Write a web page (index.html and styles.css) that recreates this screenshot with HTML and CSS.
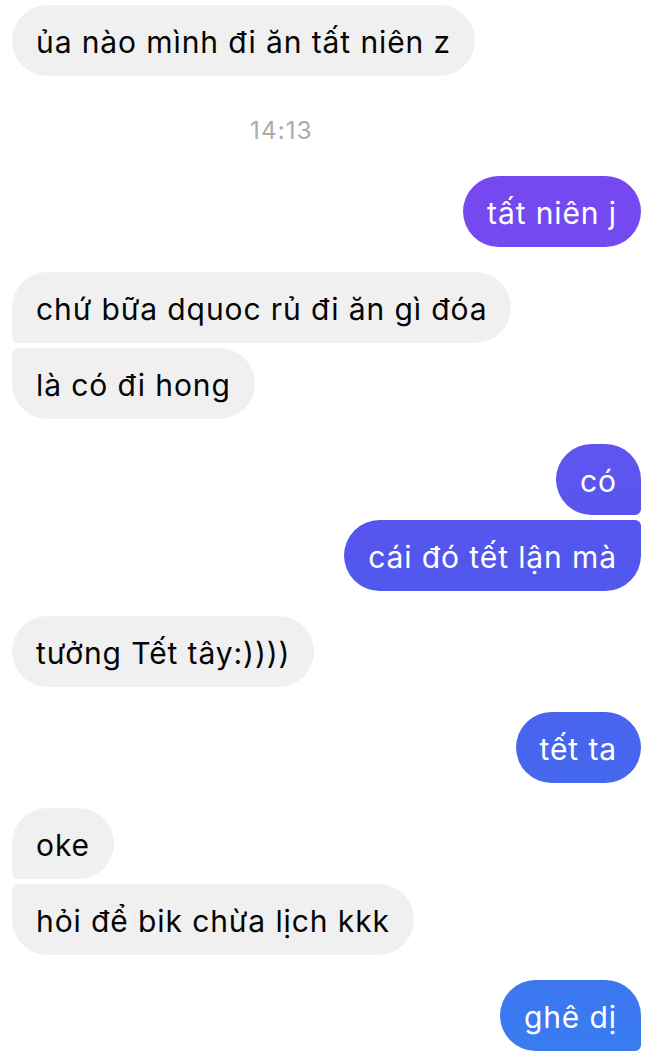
FILE: index.html
```html
<!DOCTYPE html>
<html lang="vi">
<head>
<meta charset="utf-8">
<link rel="stylesheet" href="styles.css">
</head>
<body>
<div class="chat">
  <div class="msg in single">ủa nào mình đi ăn tất niên z</div>
  <div class="time">14:13</div>
  <div class="msg out single">tất niên j</div>
  <div class="group in-group">
    <div class="msg in first">chứ bữa dquoc rủ đi ăn gì đóa</div>
    <div class="msg in last">là có đi hong</div>
  </div>
  <div class="group out-group">
    <div class="msg out first">có</div>
    <div class="msg out last">cái đó tết lận mà</div>
  </div>
  <div class="msg in single">tưởng Tết tây:))))</div>
  <div class="msg out single">tết ta</div>
  <div class="group in-group">
    <div class="msg in first">oke</div>
    <div class="msg in last">hỏi để bik chừa lịch kkk</div>
  </div>
  <div class="msg out first">ghê dị</div>
</div>
</body>
</html>
```
FILE: styles.css
```css
html, body {
  margin: 0;
  padding: 0;
  background: #ffffff;
}
body {
  width: 657px;
  height: 1052px;
  overflow: hidden;
  font-family: Inter, "Noto Sans", "Liberation Sans", sans-serif;
}
.chat {
  display: flex;
  flex-direction: column;
  gap: 25px;
  padding: 5px 16px 0 12px;
}
.group {
  display: flex;
  flex-direction: column;
  gap: 5px;
}
.in-group { align-items: flex-start; }
.out-group { align-items: flex-end; }
.msg {
  box-sizing: border-box;
  height: 71px;
  padding: 4px 24px 0 24px;
  line-height: 67px;
  font-size: 30px;
  letter-spacing: 0.9px;
  white-space: nowrap;
  border-radius: 36px;
}
.msg.in {
  align-self: flex-start;
  background: #f0f0f0;
  color: #050505;
}
.msg.out {
  align-self: flex-end;
  color: #ffffff;
  background: linear-gradient(180deg, #8446f2 0px, #7449f0 211px, #5c55ef 480px, #5356ed 556px, #4766ee 748px, #3b79f0 1015px, #3a7cf0 1052px) fixed;
}
.group .msg { align-self: auto; }
.msg.in.first { border-bottom-left-radius: 6px; }
.msg.in.last { border-top-left-radius: 6px; }
.msg.out.first { border-bottom-right-radius: 6px; }
.msg.out.last { border-top-right-radius: 6px; }
.time {
  align-self: flex-start;
  margin: 15px 0 5px 238px;
  height: 30px;
  line-height: 30px;
  font-size: 24px;
  letter-spacing: 1.2px;
  color: #ababab;
}
```
